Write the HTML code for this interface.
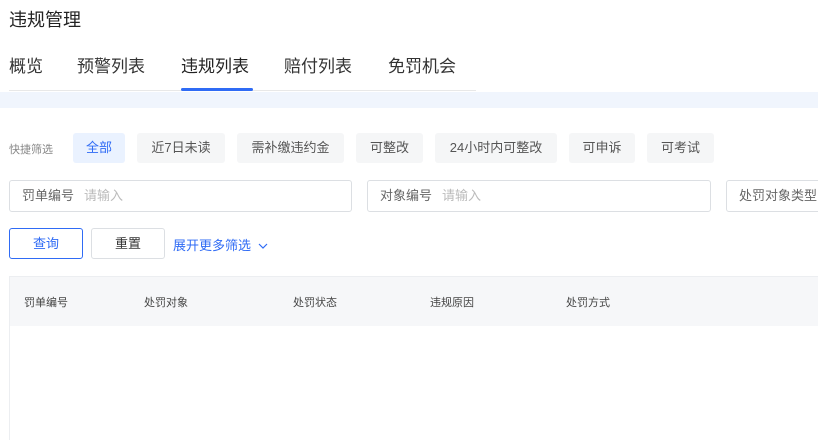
<!DOCTYPE html>
<html><head><meta charset="utf-8"><style>
*{margin:0;padding:0;box-sizing:border-box}
body{width:818px;height:440px;overflow:hidden;background:#fff;font-family:"Liberation Sans","Noto Sans CJK SC",sans-serif;color:#333;position:relative}
.a{position:absolute;white-space:nowrap}
.tab{position:absolute;top:56px;font-size:17px;line-height:22px;color:#333}
.chip{position:absolute;top:133px;height:30px;line-height:30px;background:#f5f6f7;border-radius:3px;font-size:13px;color:#555;text-align:center}
.inp{position:absolute;top:180px;height:32px;border:1px solid #dcdfe3;border-radius:3px;font-size:13px;line-height:30px;padding-left:12px;color:#666}
.inp span{color:#bbb;margin-left:10px}
.btn{position:absolute;top:228px;height:31px;border:1px solid #dcdfe3;border-radius:3px;font-size:13px;line-height:29px;text-align:center;color:#333}
.th{position:absolute;top:294px;font-size:11px;color:#444}
</style></head><body>
<div class="a" style="left:9px;top:8px;font-size:18px;line-height:24px;color:#222">违规管理</div>
<div class="tab" style="left:9px">概览</div>
<div class="tab" style="left:77px">预警列表</div>
<div class="tab" style="left:181px;color:#222">违规列表</div>
<div class="tab" style="left:284px">赔付列表</div>
<div class="tab" style="left:388px">免罚机会</div>
<div class="a" style="left:9px;top:90px;width:467px;height:1px;background:#e8e8e8"></div>
<div class="a" style="left:181px;top:88px;width:72px;height:3px;background:#2f6bf5;border-radius:2px"></div>
<div class="a" style="left:0;top:92px;width:818px;height:16px;background:#f0f5fd"></div>
<div class="a" style="left:9px;top:141px;font-size:11px;color:#888">快捷筛选</div>
<div class="chip" style="left:73px;width:52px;background:#eaf2ff;color:#2f6bf5">全部</div>
<div class="chip" style="left:137px;width:88px">近7日未读</div>
<div class="chip" style="left:237px;width:107px">需补缴违约金</div>
<div class="chip" style="left:356px;width:67px">可整改</div>
<div class="chip" style="left:435px;width:122px">24小时内可整改</div>
<div class="chip" style="left:569px;width:66px">可申诉</div>
<div class="chip" style="left:647px;width:67px">可考试</div>
<div class="inp" style="left:9px;width:343px">罚单编号<span>请输入</span></div>
<div class="inp" style="left:367px;width:344px">对象编号<span>请输入</span></div>
<div class="inp" style="left:726px;width:120px">处罚对象类型</div>
<div class="btn" style="left:9px;width:74px;border-color:#2f6bf5;color:#2f6bf5">查询</div>
<div class="btn" style="left:91px;width:74px">重置</div>
<div class="a" style="left:173px;top:235px;font-size:13px;color:#2f6bf5">展开更多筛选 <svg width="10" height="8" viewBox="0 0 10 8" style="margin-left:3px"><path d="M1 2l4 4 4-4" fill="none" stroke="#2f6bf5" stroke-width="1.2"/></svg></div>
<div class="a" style="left:9px;top:276px;width:809px;height:164px;border-left:1px solid #eceef1;border-top:1px solid #eceef1"></div>
<div class="a" style="left:10px;top:277px;width:808px;height:49px;background:#f6f7f9"></div>
<div class="th" style="left:24px">罚单编号</div>
<div class="th" style="left:144px">处罚对象</div>
<div class="th" style="left:293px">处罚状态</div>
<div class="th" style="left:430px">违规原因</div>
<div class="th" style="left:566px">处罚方式</div>
</body></html>
